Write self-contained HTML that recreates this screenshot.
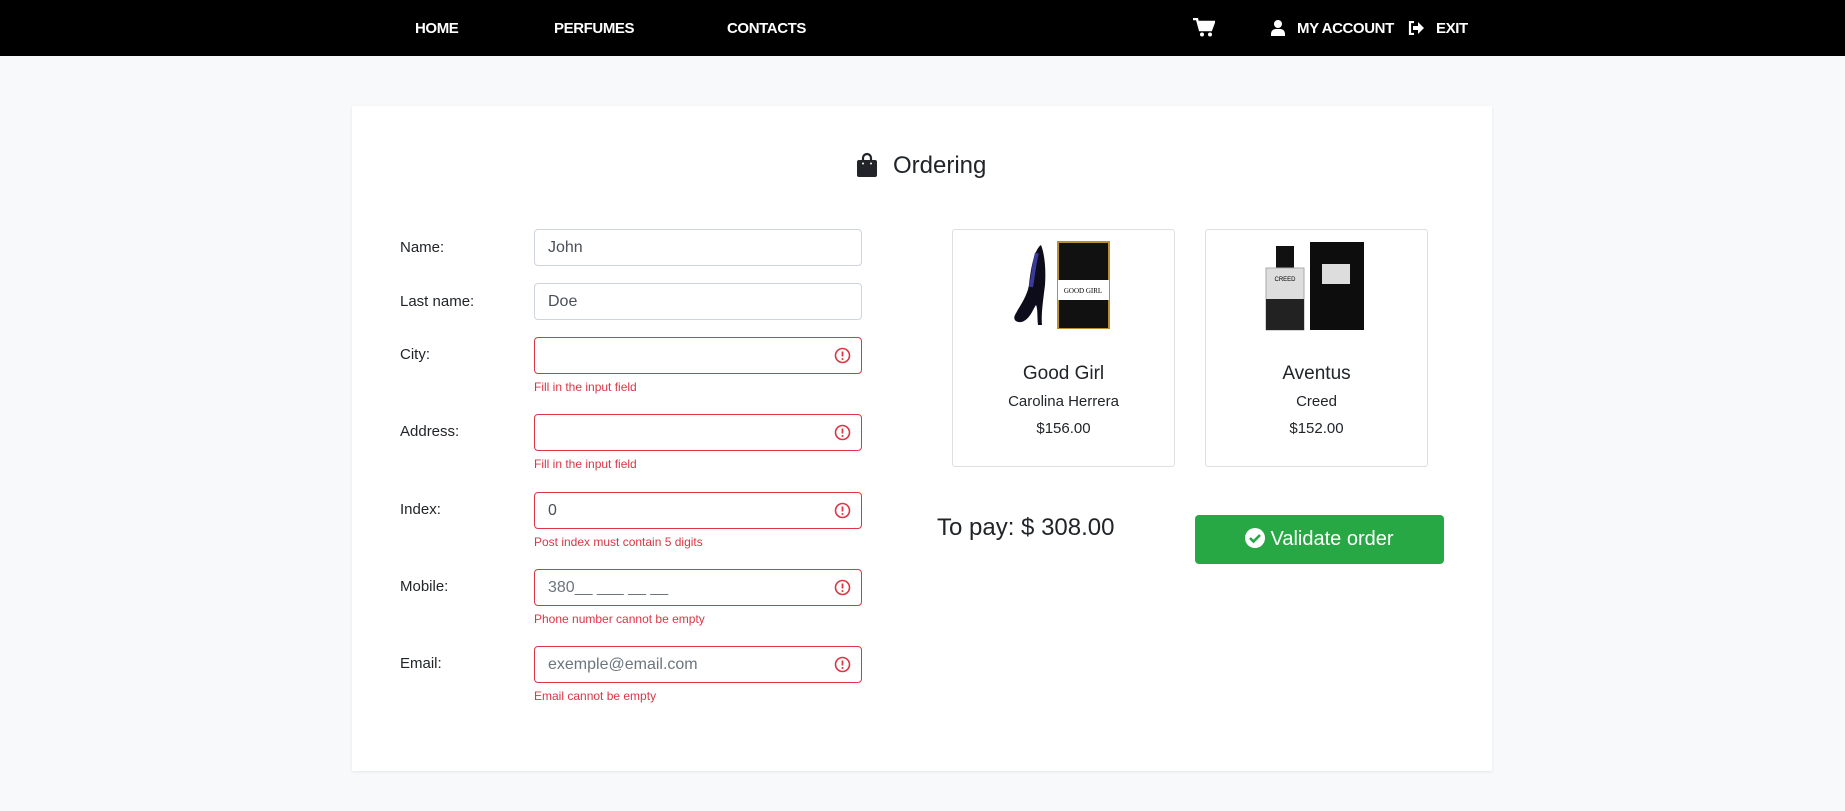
<!DOCTYPE html>
<html><head><meta charset="utf-8"><style>
*{box-sizing:border-box;margin:0;padding:0}
body{width:1845px;height:811px;background:#f8f9fa;font-family:"Liberation Sans",sans-serif;color:#212529;position:relative;overflow:hidden}
.nav{position:absolute;left:0;top:0;width:1845px;height:56px;background:#000}
.nav span{position:absolute;top:20px;color:#fff;font-weight:bold;font-size:15px;line-height:18px;letter-spacing:-0.4px}
.card{position:absolute;left:352px;top:106px;width:1140px;height:665px;background:#fff;box-shadow:0 1px 3px rgba(0,0,0,.08)}
.abs{position:absolute}
.lbl{position:absolute;left:400px;font-size:15px;line-height:20px}
.inp{position:absolute;left:534px;width:328px;height:37px;border:1px solid #ced4da;border-radius:4px;font-size:16px;line-height:35px;padding-left:13px;color:#495057}
.inp.err{border-color:#dc3545}
.inp .ic{position:absolute;right:10px;top:9px}
.ph{color:#6c757d}
.em{position:absolute;left:534px;font-size:12px;color:#dc3545;line-height:16px}
.pc{position:absolute;top:229px;width:223px;height:238px;border:1px solid #dfdfdf;border-radius:3px;text-align:center}
.pc .t{position:absolute;top:132px;width:100%;font-size:19px;line-height:24px}
.pc .b{position:absolute;top:162px;width:100%;font-size:15px;line-height:20px}
.pc .p{position:absolute;top:189px;width:100%;font-size:15px;line-height:20px}
</style></head><body>
<div class="nav">
<span style="left:415px">HOME</span>
<span style="left:554px">PERFUMES</span>
<span style="left:727px">CONTACTS</span>
<svg class="abs" style="left:1193px;top:18px" width="22" height="19" viewBox="0 0 22 19"><path d="M0 1h4l3 11h11l3-8H6" fill="none" stroke="#fff" stroke-width="2.4"/><path d="M6 4h15l-3 8H8z" fill="#fff"/><circle cx="9" cy="16.5" r="2" fill="#fff"/><circle cx="17" cy="16.5" r="2" fill="#fff"/></svg>
<svg class="abs" style="left:1271px;top:20px" width="14" height="16" viewBox="0 0 14 16"><circle cx="7" cy="4" r="4" fill="#fff"/><path d="M0 16v-2c0-3 2-5 5-5h4c3 0 5 2 5 5v2z" fill="#fff"/></svg>
<span style="left:1297px">MY ACCOUNT</span>
<svg class="abs" style="left:1408px;top:21px" width="16" height="14" viewBox="0 0 16 14"><path d="M6 1H2v12h4" fill="none" stroke="#fff" stroke-width="2.2"/><path d="M5 5h5V1l6 6-6 6V9H5z" fill="#fff"/></svg>
<span style="left:1436px">EXIT</span>
</div>
<div class="card"></div>
<svg class="abs" style="left:857px;top:152px" width="20" height="25" viewBox="0 0 20 25"><path d="M6 9V6a4 4 0 0 1 8 0v3" fill="none" stroke="#212529" stroke-width="2.2"/><rect x="0" y="8" width="20" height="17" rx="2" fill="#212529"/><circle cx="6" cy="11.5" r="1" fill="#fff"/><circle cx="14" cy="11.5" r="1" fill="#fff"/></svg>
<div class="abs" style="left:893px;top:151px;font-size:24px;line-height:30px">Ordering</div>

<div class="lbl" style="top:238px">Name:</div>
<div class="inp" style="top:229px">John</div>
<div class="lbl" style="top:292px">Last name:</div>
<div class="inp" style="top:283px">Doe</div>
<div class="lbl" style="top:345px">City:</div>
<div class="inp err" style="top:337px"><svg class="ic" width="17" height="17" viewBox="0 0 17 17"><circle cx="8.5" cy="8.5" r="7" fill="none" stroke="#dc3545" stroke-width="1.6"/><path d="M8.5 4.5v5" stroke="#dc3545" stroke-width="1.8"/><circle cx="8.5" cy="12" r="1" fill="#dc3545"/></svg></div>
<div class="em" style="top:379px">Fill in the input field</div>
<div class="lbl" style="top:422px">Address:</div>
<div class="inp err" style="top:414px"><svg class="ic" width="17" height="17" viewBox="0 0 17 17"><circle cx="8.5" cy="8.5" r="7" fill="none" stroke="#dc3545" stroke-width="1.6"/><path d="M8.5 4.5v5" stroke="#dc3545" stroke-width="1.8"/><circle cx="8.5" cy="12" r="1" fill="#dc3545"/></svg></div>
<div class="em" style="top:456px">Fill in the input field</div>
<div class="lbl" style="top:500px">Index:</div>
<div class="inp err" style="top:492px">0<svg class="ic" width="17" height="17" viewBox="0 0 17 17"><circle cx="8.5" cy="8.5" r="7" fill="none" stroke="#dc3545" stroke-width="1.6"/><path d="M8.5 4.5v5" stroke="#dc3545" stroke-width="1.8"/><circle cx="8.5" cy="12" r="1" fill="#dc3545"/></svg></div>
<div class="em" style="top:534px">Post index must contain 5 digits</div>
<div class="lbl" style="top:577px">Mobile:</div>
<div class="inp err" style="top:569px"><span class="ph">380__ ___ __ __</span><svg class="ic" width="17" height="17" viewBox="0 0 17 17"><circle cx="8.5" cy="8.5" r="7" fill="none" stroke="#dc3545" stroke-width="1.6"/><path d="M8.5 4.5v5" stroke="#dc3545" stroke-width="1.8"/><circle cx="8.5" cy="12" r="1" fill="#dc3545"/></svg></div>
<div class="em" style="top:611px">Phone number cannot be empty</div>
<div class="lbl" style="top:654px">Email:</div>
<div class="inp err" style="top:646px"><span class="ph">exemple@email.com</span><svg class="ic" width="17" height="17" viewBox="0 0 17 17"><circle cx="8.5" cy="8.5" r="7" fill="none" stroke="#dc3545" stroke-width="1.6"/><path d="M8.5 4.5v5" stroke="#dc3545" stroke-width="1.8"/><circle cx="8.5" cy="12" r="1" fill="#dc3545"/></svg></div>
<div class="em" style="top:688px">Email cannot be empty</div>

<div class="pc" style="left:952px">
<svg class="abs" style="left:58px;top:9px" width="105" height="90" viewBox="0 0 105 90"><path d="M30 6c-6 4-10 20-12 40-2 12-10 22-14 30-3 6 4 9 9 6 7-4 9-12 12-16 2 4 1 12 2 20h4c-1-10 1-24 3-40 1-14 0-30-4-40z" fill="#0c0c1a"/><path d="M26 14c-3 10-4 24-6 34" stroke="#3a3a9a" stroke-width="4" fill="none"/><rect x="47" y="3" width="51" height="87" fill="#111" stroke="#b8902e" stroke-width="2"/><rect x="47" y="41" width="51" height="20" fill="#fff"/><text x="72" y="54" font-size="7" text-anchor="middle" font-family="Liberation Serif">GOOD GIRL</text></svg>
<div class="t">Good Girl</div><div class="b">Carolina Herrera</div><div class="p">$156.00</div></div>
<div class="pc" style="left:1205px">
<svg class="abs" style="left:58px;top:9px" width="105" height="92" viewBox="0 0 105 92"><rect x="12" y="7" width="18" height="22" fill="#111"/><rect x="2" y="29" width="38" height="62" fill="#ddd" stroke="#aaa"/><rect x="2" y="60" width="38" height="31" fill="#222"/><text x="21" y="42" font-size="6" text-anchor="middle">CREED</text><rect x="46" y="3" width="54" height="88" fill="#0d0d0d"/><rect x="58" y="25" width="28" height="20" fill="#ddd"/></svg>
<div class="t">Aventus</div><div class="b">Creed</div><div class="p">$152.00</div></div>

<div class="abs" style="left:937px;top:513px;font-size:24px;line-height:30px">To pay: $ 308.00</div>
<div class="abs" style="left:1195px;top:515px;width:249px;height:49px;background:#28a745;border-radius:4px;color:#fff;font-size:20px;line-height:49px;text-align:center"><svg style="vertical-align:-3px;margin-right:5px" width="20" height="20" viewBox="0 0 20 20"><circle cx="10" cy="10" r="10" fill="#fff"/><path d="M5 10l3.5 3.5L15 7" fill="none" stroke="#28a745" stroke-width="2.6"/></svg>Validate order</div>
</body></html>
